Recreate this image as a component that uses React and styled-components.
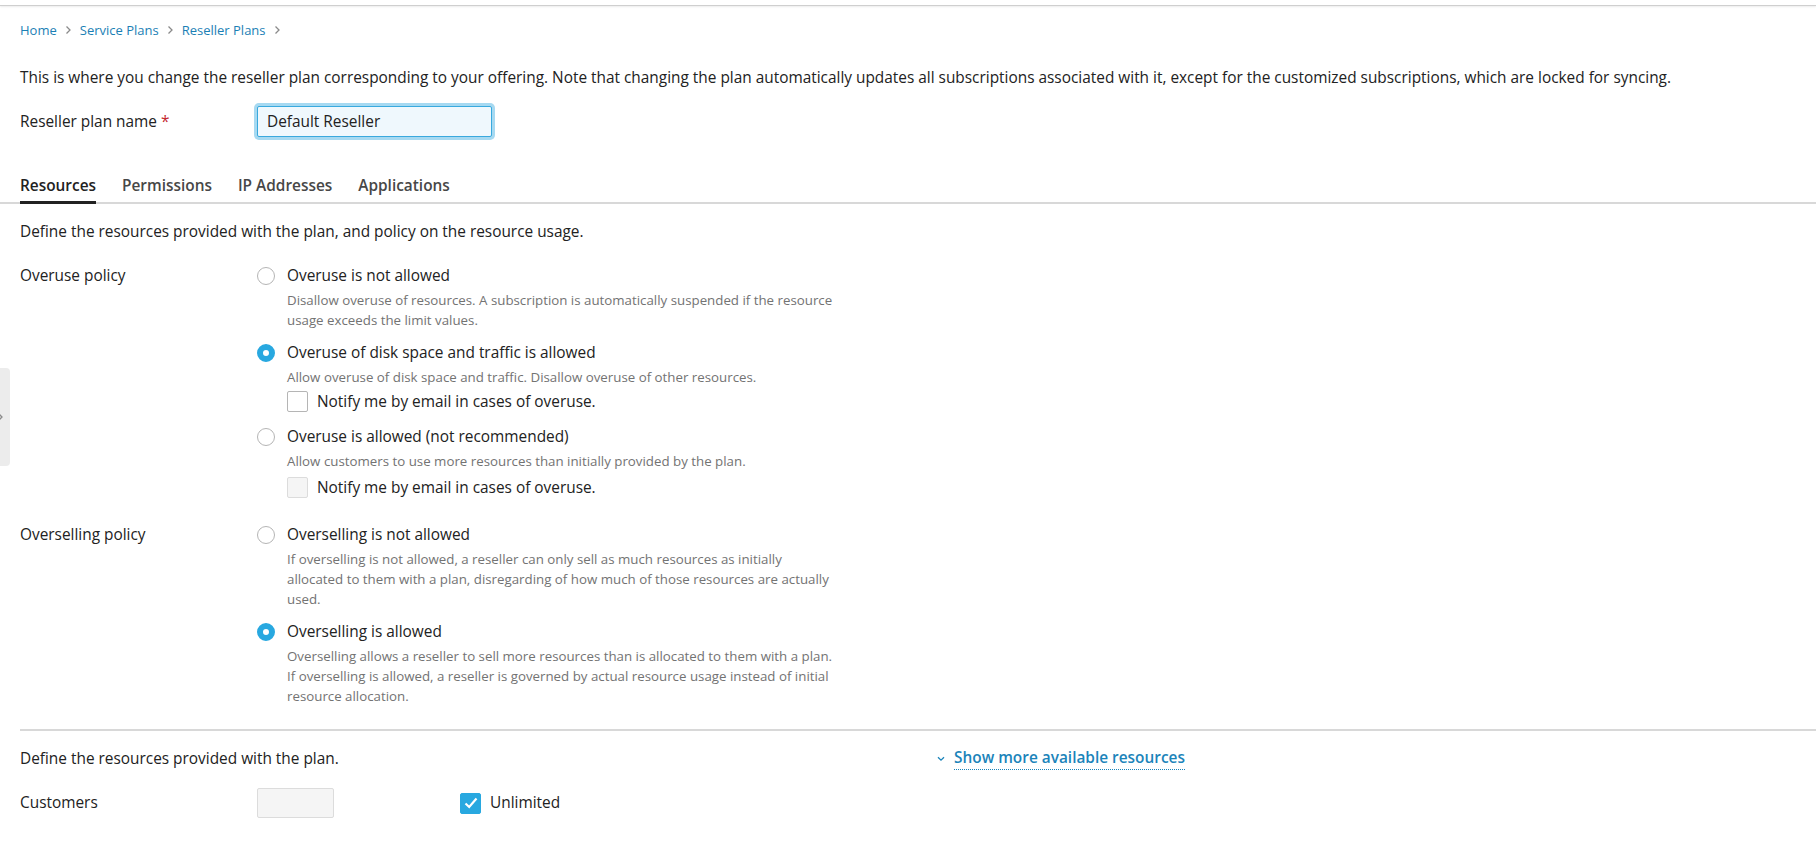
import React, { useState } from "react";
import styled, { createGlobalStyle } from "styled-components";

const GlobalStyle = createGlobalStyle`
  body {
    margin: 0;
    background: #fff;
    font-family: "Open Sans", "Noto Sans", sans-serif;
    font-size: 15.4px;
    color: #222;
  }
  * { box-sizing: border-box; }
`;

const Page = styled.div`
  position: relative;
  min-height: 100vh;
`;

const TopBar = styled.div`
  height: 6px;
  border-bottom: 1px solid #cfcfcf;
  box-shadow: 0 1px 2px rgba(0, 0, 0, 0.08);
`;

const SideHandle = styled.div`
  position: absolute;
  left: 0;
  top: 368px;
  width: 10px;
  height: 98px;
  background: #ececec;
  border-radius: 0 4px 4px 0;
  display: flex;
  align-items: center;
  overflow: hidden;
  svg {
    margin-left: -3px;
  }
`;

const Content = styled.div`
  padding: 14px 0 40px 20px;
`;

const Breadcrumbs = styled.nav`
  display: flex;
  align-items: center;
  gap: 8px;
  font-size: 13px;
  line-height: 20px;
  a {
    color: #1b80b5;
    text-decoration: none;
  }
`;

const Intro = styled.p`
  margin: 28px 0 0;
  line-height: 20px;
`;

const FormRow = styled.div`
  display: grid;
  grid-template-columns: 237px 1fr;
  align-items: ${(p) => p.$align || "start"};
  margin-top: ${(p) => p.$top || 0}px;
`;

const Label = styled.div`
  line-height: 20px;
  padding-top: ${(p) => p.$pad || 0}px;
  span {
    color: #c4262e;
  }
`;

const TextInput = styled.input`
  width: 235px;
  height: 31px;
  padding: 0 9px;
  font-family: inherit;
  font-size: 15.4px;
  color: #222;
  background: #eff8fd;
  border: 1px solid #39a9de;
  border-radius: 2px;
  box-shadow: 0 0 0 3px #a6d9f1;
  outline: none;
  margin: 6px 0 0 0;
`;

const Tabs = styled.div`
  display: flex;
  gap: 26px;
  margin: 39px 0 0 -20px;
  padding-left: 20px;
  border-bottom: 2px solid #d8d8d8;
`;

const Tab = styled.div`
  font-weight: 600;
  line-height: 20px;
  padding-bottom: 5px;
  margin-bottom: -2px;
  color: ${(p) => (p.$active ? "#222" : "#474747")};
  border-bottom: 3px solid ${(p) => (p.$active ? "#222" : "transparent")};
  cursor: pointer;
`;

const SectionText = styled.p`
  margin: ${(p) => p.$top || 0}px 0 0;
  line-height: 20px;
`;

const Options = styled.div`
  display: flex;
  flex-direction: column;
  width: 590px;
`;

const Option = styled.div`
  margin-top: ${(p) => (p.$first ? 0 : 13)}px;
`;

const RadioLine = styled.label`
  display: flex;
  align-items: center;
  gap: 12px;
  line-height: 20px;
  cursor: pointer;
`;

const RadioDot = styled.span`
  width: 18px;
  height: 18px;
  border-radius: 50%;
  flex-shrink: 0;
  border: ${(p) => (p.$checked ? "6px solid #28a8e0" : "1px solid #b5b5b5")};
  background: #fff;
`;

const Hint = styled.div`
  margin: 4px 0 0 30px;
  width: 552px;
  font-size: 13.3px;
  line-height: 20px;
  color: #737373;
`;

const CheckLine = styled.label`
  display: flex;
  align-items: center;
  gap: 9px;
  margin: ${(p) => p.$m || "0"};
  line-height: 20px;
  cursor: pointer;
`;

const Box = styled.span`
  width: 21px;
  height: 21px;
  flex-shrink: 0;
  border-radius: 2px;
  display: flex;
  align-items: center;
  justify-content: center;
  border: 1px solid
    ${(p) => (p.$checked ? "#28a8e0" : p.$disabled ? "#dcdcdc" : "#b5b5b5")};
  background: ${(p) =>
    p.$checked ? "#28a8e0" : p.$disabled ? "#f5f5f5" : "#fff"};
`;

const Divider = styled.hr`
  border: none;
  border-top: 2px solid #d8d8d8;
  margin: 23px 0 0;
`;

const ResourcesHead = styled.div`
  display: grid;
  grid-template-columns: 917px 1fr;
  align-items: center;
  margin-top: 15px;
`;

const MoreLink = styled.a`
  display: inline-flex;
  align-items: center;
  gap: 9px;
  font-weight: 600;
  color: #1b84ba;
  text-decoration: none;
  cursor: pointer;
  span {
    line-height: 20px;
    border-bottom: 1px dotted #1b84ba;
    padding-bottom: 1px;
  }
`;

const ValueRow = styled.div`
  display: flex;
  align-items: center;
  gap: 126px;
`;

const SmallInput = styled.input`
  width: 77px;
  height: 30px;
  border: 1px solid #dcdcdc;
  border-radius: 2px;
  background: #f5f5f5;
  outline: none;
`;

const Chevron = () => (
  <svg width="7" height="10" viewBox="0 0 7 10" fill="none">
    <path d="M1.5 1.5 5 5 1.5 8.5" stroke="#8a8a8a" strokeWidth="1.3" />
  </svg>
);

const Check = () => (
  <svg width="14" height="12" viewBox="0 0 14 12" fill="none">
    <path d="M1.5 6.5 5.2 10 12.5 1.5" stroke="#fff" strokeWidth="2.2" />
  </svg>
);

const Checkbox = ({ checked, disabled, children, m }) => (
  <CheckLine $m={m}>
    <Box $checked={checked} $disabled={disabled}>
      {checked && <Check />}
    </Box>
    {children}
  </CheckLine>
);

const Radio = ({ checked, label, hint, first, onPick, children }) => (
  <Option $first={first}>
    <RadioLine onClick={onPick}>
      <RadioDot $checked={checked} />
      {label}
    </RadioLine>
    <Hint>{hint}</Hint>
    {children}
  </Option>
);

export default function App() {
  const [tab, setTab] = useState(0);
  const [overuse, setOveruse] = useState(1);
  const [overselling, setOverselling] = useState(1);
  const tabs = ["Resources", "Permissions", "IP Addresses", "Applications"];

  return (
    <Page>
      <GlobalStyle />
      <TopBar />
      <SideHandle>
        <Chevron />
      </SideHandle>
      <Content>
        <Breadcrumbs>
          <a href="#">Home</a>
          <Chevron />
          <a href="#">Service Plans</a>
          <Chevron />
          <a href="#">Reseller Plans</a>
          <Chevron />
        </Breadcrumbs>

        <Intro>
          This is where you change the reseller plan corresponding to your
          offering. Note that changing the plan automatically updates all
          subscriptions associated with it, except for the customized
          subscriptions, which are locked for syncing.
        </Intro>

        <FormRow $top={12}>
          <Label $pad={12}>
            Reseller plan name <span>*</span>
          </Label>
          <div>
            <TextInput defaultValue="Default Reseller" />
          </div>
        </FormRow>

        <Tabs>
          {tabs.map((t, i) => (
            <Tab key={t} $active={tab === i} onClick={() => setTab(i)}>
              {t}
            </Tab>
          ))}
        </Tabs>

        <SectionText $top={18}>
          Define the resources provided with the plan, and policy on the
          resource usage.
        </SectionText>

        <FormRow $top={24}>
          <Label>Overuse policy</Label>
          <Options>
            <Radio
              first
              checked={overuse === 0}
              onPick={() => setOveruse(0)}
              label="Overuse is not allowed"
              hint="Disallow overuse of resources. A subscription is automatically suspended if the resource usage exceeds the limit values."
            />
            <Radio
              checked={overuse === 1}
              onPick={() => setOveruse(1)}
              label="Overuse of disk space and traffic is allowed"
              hint="Allow overuse of disk space and traffic. Disallow overuse of other resources."
            >
              <Checkbox m="4px 0 2px 30px">Notify me by email in cases of overuse.</Checkbox>
            </Radio>
            <Radio
              checked={overuse === 2}
              onPick={() => setOveruse(2)}
              label="Overuse is allowed (not recommended)"
              hint="Allow customers to use more resources than initially provided by the plan."
            >
              <Checkbox disabled m="6px 0 2px 30px">
                Notify me by email in cases of overuse.
              </Checkbox>
            </Radio>
          </Options>
        </FormRow>

        <FormRow $top={25}>
          <Label>Overselling policy</Label>
          <Options>
            <Radio
              first
              checked={overselling === 0}
              onPick={() => setOverselling(0)}
              label="Overselling is not allowed"
              hint="If overselling is not allowed, a reseller can only sell as much resources as initially allocated to them with a plan, disregarding of how much of those resources are actually used."
            />
            <Radio
              checked={overselling === 1}
              onPick={() => setOverselling(1)}
              label="Overselling is allowed"
              hint="Overselling allows a reseller to sell more resources than is allocated to them with a plan. If overselling is allowed, a reseller is governed by actual resource usage instead of initial resource allocation."
            />
          </Options>
        </FormRow>

        <Divider />

        <ResourcesHead>
          <span>Define the resources provided with the plan.</span>
          <div>
            <MoreLink>
              <svg width="8" height="6" viewBox="0 0 8 6" fill="none">
                <path d="M1 1.2 4 4.2 7 1.2" stroke="#1b84ba" strokeWidth="1.3" />
              </svg>
              <span>Show more available resources</span>
            </MoreLink>
          </div>
        </ResourcesHead>

        <FormRow $top={18} $align="center">
          <Label>Customers</Label>
          <ValueRow>
            <SmallInput disabled />
            <Checkbox checked>Unlimited</Checkbox>
          </ValueRow>
        </FormRow>
      </Content>
    </Page>
  );
}
